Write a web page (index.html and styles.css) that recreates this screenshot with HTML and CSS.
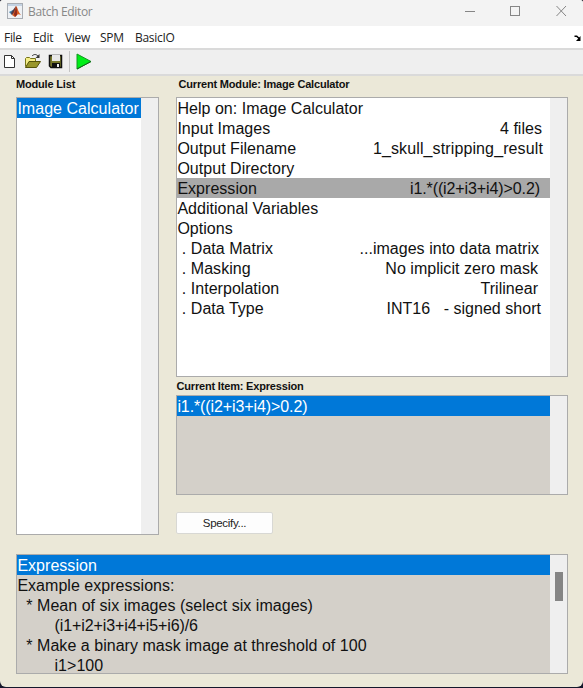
FILE: index.html
```html
<!DOCTYPE html>
<html lang="en">
<head>
<meta charset="utf-8">
<title>Batch Editor</title>
<link rel="stylesheet" href="styles.css">
</head>
<body>
<div class="window">
  <header class="titlebar">
    <svg class="logo" width="16" height="16" viewBox="0 0 16 16">
      <rect x=".5" y=".5" width="15" height="15" fill="#eef1f5" stroke="#a9adb3"/>
      <path d="M1 1h14v2H1z" fill="#c4d2e2"/>
      <path d="M2 9l4-2 2 2-3 3z" fill="#3d7fa8"/>
      <path d="M6 7l3-4-1 6-3 3-1-2z" fill="#563b46"/>
      <path d="M9 3c2 2 2 6 5 9-2-1-3-1-4 0l-2 2-3-2c2-2 3-6 4-9z" fill="#d95b20"/>
      <path d="M9 3c1 3 1 6 1 9l-2 2-1-3c1-2 1.500-5 2-8z" fill="#8e2b1e"/>
    </svg>
    <span class="title">Batch Editor</span>
    <svg class="controls" width="104" height="12" viewBox="0 0 104 12" fill="none" stroke="#858585">
      <path d="M0 6.500h10"/>
      <rect x="45.500" y="1.500" width="9" height="9"/>
      <path d="M91.500 1l9.500 10M101 1l-9.500 10"/>
    </svg>
  </header>
  <nav class="menubar">
    <span class="m-file">File</span><span class="m-edit">Edit</span><span class="m-view">View</span><span class="m-spm">SPM</span><span class="m-basic">BasicIO</span>
    <svg class="dock" width="8" height="7" viewBox="0 0 8 7"><path d="M.5 1.200h2.200l2.500 2.300" fill="none" stroke="#000" stroke-width="1.600"/><path d="M6.500 1v5H2z" fill="#000"/></svg>
  </nav>
  <div class="toolbar">
    <svg width="96" height="21" viewBox="0 0 96 21">
      <path d="M4.500 4.500h7l3 3v9h-10z" fill="#fff" stroke="#333"/>
      <path d="M11.500 4.500v3h3" fill="none" stroke="#333"/>
      <path d="M25.500 15.500V7.500l1-1h3l1 1h5V10" fill="#f5ee87" stroke="#77751a"/>
      <path d="M25.500 16.500L29 10.500h11.500l-4 6z" fill="#99962b" stroke="#55530a"/>
      <path d="M32 5c2-2 4-2 6 0" fill="none" stroke="#333"/>
      <path d="M39.500 3v4h-4z" fill="#333"/>
      <path d="M49.500 4.500h12v12H51l-1.500-1.500z" fill="#77782c" stroke="#111" stroke-width="1.500"/>
      <path d="M52 4h8v6h-8z" fill="#e8e8e8"/>
      <path d="M52 12h8v5h-8z" fill="#111"/><path d="M57 13h2v3h-2z" fill="#eee"/>
      <path d="M69.500 0v21" stroke="#c4c4c4"/>
      <path d="M77 3v15l14-7.500z" fill="#00ee18" stroke="#129820"/>
      <path d="M77 18l14-7.500" stroke="#126719" fill="none"/>
    </svg>
  </div>
  <main class="content">
    <section class="modules">
      <h2>Module List</h2>
      <div class="list white">
        <div class="rows"><div class="row selected">Image Calculator</div></div>
        <div class="scroll"></div>
      </div>
    </section>
    <section class="details">
      <h2 class="indent">Current Module: Image Calculator</h2>
      <div class="list white settings">
        <div class="rows">
          <div class="row"><span>Help on: Image Calculator</span></div>
          <div class="row"><span>Input Images</span><span class="end-8">4 files</span></div>
          <div class="row"><span>Output Filename</span><span class="end-7 filename">1_skull_stripping_result</span></div>
          <div class="row"><span>Output Directory</span></div>
          <div class="row current"><span>Expression</span><span class="end-10 formula">i1.*((i2+i3+i4)&gt;0.2)</span></div>
          <div class="row"><span>Additional Variables</span></div>
          <div class="row"><span>Options</span></div>
          <div class="row"><span> . Data Matrix</span><span class="end-11">...images into data matrix</span></div>
          <div class="row"><span> . Masking</span><span class="end-12">No implicit zero mask</span></div>
          <div class="row"><span> . Interpolation</span><span class="end-12">Trilinear</span></div>
          <div class="row"><span> . Data Type</span><span class="end-9">INT16   - signed short</span></div>
        </div>
        <div class="scroll"></div>
      </div>
      <h2 class="item-title">Current Item: Expression</h2>
      <div class="list item">
        <div class="rows"><div class="row selected formula">i1.*((i2+i3+i4)&gt;0.2)</div></div>
        <div class="scroll"></div>
      </div>
      <button class="specify">Specify...</button>
    </section>
    <section class="list help">
      <div class="rows">
        <div class="row selected">Expression</div>
        <div class="row">Example expressions:</div>
        <div class="row">  * Mean of six images (select six images)</div>
        <div class="row sub formula">(i1+i2+i3+i4+i5+i6)/6</div>
        <div class="row">  * Make a binary mask image at threshold of 100</div>
        <div class="row sub">i1&gt;100</div>
      </div>
      <div class="scroll"><div class="thumb"></div></div>
    </section>
  </main>
</div>
</body>
</html>
```
FILE: styles.css
```css
* { box-sizing: border-box; }
body { margin: 0; background: #15172b; overflow: hidden; }
.window {
  width: 583px; height: 687px; overflow: hidden;
  display: flex; flex-direction: column;
  border-radius: 3px 3px 6px 6px;
  background: #ebe8d8;
  font-family: "Liberation Sans", Arial, sans-serif;
}
.titlebar {
  height: 26px; flex: none; display: flex; align-items: flex-start;
  padding: 3px 17px 0 7px; background: #f3f3f3;
}
.title {
  margin: 0 auto 0 5px; color: #888;
  font: 12px/18px "Open Sans", sans-serif; letter-spacing: -.33px;
}
.controls { margin-top: 2px; margin-right: -3px; }
.menubar {
  height: 24px; flex: none; display: flex; align-items: flex-start;
  padding: 3px 1px 0 4px; background: #fff; border-bottom: 2px solid #dadada;
  color: #222; font: 12px/18px "Open Sans", sans-serif; letter-spacing: -.3px; white-space: nowrap;
}
.m-file { width: 29px; }
.m-edit { width: 32px; }
.m-view { width: 35px; }
.m-spm { width: 35px; }
.dock { margin: 6px 0 0 auto; }
.toolbar { height: 26px; flex: none; padding-top: 1px; background: #efefef; border-bottom: 2px solid #dadada; }
.toolbar svg { display: block; }
.content {
  flex: 1; display: grid;
  grid-template: 459px 120px / 143px 392px;
  gap: 19px 17px; padding: 0 15px 0 16px;
}
h2 { margin: 0; height: 21px; font-size: 11px; line-height: 16px; letter-spacing: -.18px; color: #111; white-space: nowrap; }
h2.indent { padding-left: 2.5px; }
.modules, .details { display: flex; flex-direction: column; }
.list { display: flex; background: #d4d0c9; border: 1px solid #ababab; }
.white { background: #fff; }
.modules .list { flex: 1; }
.settings { height: 280px; }
h2.item-title { height: 18px; line-height: 19px; padding-left: .5px; }
.item { height: 100px; }
.rows { flex: 1; overflow: hidden; }
.scroll { width: 17px; flex: none; background: #efefef; display: flex; justify-content: center; }
.row {
  display: flex; justify-content: space-between;
  height: 20px; padding-left: .4px;
  font-size: 16px; line-height: 21px; letter-spacing: .03px; white-space: pre; color: #111;
}
.selected { background: #0078d8; color: #fff; }
.current { background: #a9a9a9; }
.formula { letter-spacing: -.1px; }
.filename { letter-spacing: .12px; }
.end-7 { padding-right: 7px; }
.end-8 { padding-right: 8px; }
.end-9 { padding-right: 9px; }
.end-10 { padding-right: 10px; }
.end-11 { padding-right: 11px; }
.end-12 { padding-right: 12px; }
.specify {
  width: 97px; height: 22px; margin-top: 17px; padding: 0;
  background: #fdfdfd; border: 1px solid #d8d8d4; border-radius: 2px;
  font: 11.5px/18px "Liberation Sans", Arial, sans-serif; letter-spacing: -.3px; color: #222;
}
.help { grid-column: 1 / -1; width: 552px; }
.sub { padding-left: 37.5px; }
.thumb { width: 8px; height: 29px; margin-top: 17px; background: #858585; }
```
